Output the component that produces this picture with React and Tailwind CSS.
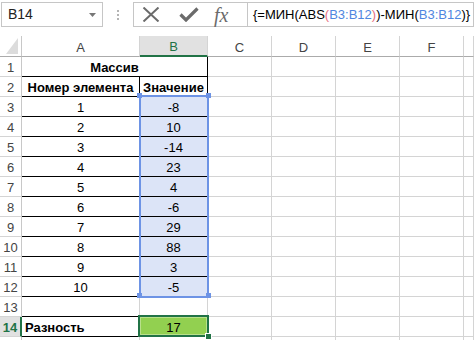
import React from "react";
import { twMerge } from "tailwind-merge";

const values = [-8, 10, -14, 23, 4, -6, 29, 88, 3, -5];

const Cell = ({ children, className = "" }) => (
  <div
    className={twMerge(
      "box-border flex items-center justify-center border-r border-b border-r-[#d4d4d4] border-b-[#d4d4d4] pt-[2px] text-[13px] leading-none text-black",
      className
    )}
  >
    {children}
  </div>
);

const RowHead = ({ n, active }) => (
  <Cell
    className={
      active
        ? "border-r-2 border-r-[#217346] bg-[#e1e1e1] font-bold text-[#217346]"
        : "border-r-[#c8c8c8] text-[#444]"
    }
  >
    {n}
  </Cell>
);

const Blank = ({ count = 5 }) =>
  Array.from({ length: count }).map((_, i) => <Cell key={i} />);

const Ref = ({ children }) => <span className="text-[#4f86e0]">{children}</span>;
const Par = ({ children }) => <span className="text-[#e8707f]">{children}</span>;

const App = () => {
  return (
    <div className="w-[474px] h-[340px] overflow-hidden bg-white font-['Liberation_Sans',Arial,sans-serif]">
      {/* строка формул */}
      <div className="flex h-[36px] items-start pt-[2px] pl-[1px]">
        <div className="box-border flex h-[25px] w-[102px] items-center justify-between border border-[#c6c6c6] pl-[6px] pr-[6px]">
          <span className="text-[14px] text-[#222]">B14</span>
          <svg width="7" height="4" viewBox="0 0 7 4">
            <path d="M0 0 H7 L3.5 4 Z" fill="#777" />
          </svg>
        </div>
        <div className="flex w-[30px] h-[25px] flex-col items-center justify-center gap-[2px]">
          <span className="h-[2px] w-[2px] bg-[#b4b4b4]" />
          <span className="h-[2px] w-[2px] bg-[#b4b4b4]" />
          <span className="h-[2px] w-[2px] bg-[#b4b4b4]" />
        </div>
        <div className="box-border flex h-[25px] flex-1 border border-[#c6c6c6]">
          <div className="flex w-[113px] items-center">
            <svg width="18" height="15" viewBox="0 0 18 15" className="ml-[8px]">
              <path d="M1.5 0.5 L16.5 14.5 M16.5 0.5 L1.5 14.5" stroke="#6b6b6b" strokeWidth="2" />
            </svg>
            <svg width="20" height="15" viewBox="0 0 20 15" className="ml-[19px]">
              <polyline points="1.5,7.5 7,13 18.5,1.5" fill="none" stroke="#6b6b6b" strokeWidth="3.2" />
            </svg>
            <span className="ml-[15px] font-['Liberation_Serif',serif] text-[20px] italic leading-none text-[#6b6b6b]">
              fx
            </span>
          </div>
          <div className="flex flex-1 items-center border-l border-[#c6c6c6] pl-[5px] text-[13px] text-black whitespace-nowrap">
            {"{=МИН(ABS"}
            <Par>(</Par>
            <Ref>B3:B12</Ref>
            <Par>)</Par>
            {")-МИН("}
            <Ref>B3:B12</Ref>
            {")}"}
          </div>
        </div>
      </div>

      {/* сетка */}
      <div className="relative grid grid-cols-[22px_118px_68px_64px_64px_64px_64px_10px] grid-rows-[21px_repeat(15,20px)]">
        <div className="box-border relative border-r border-b border-r-[#c8c8c8] border-b-[#ababab]">
          <svg width="12" height="16" viewBox="0 0 12 16" className="absolute right-[3px] bottom-[2px]">
            <path d="M12 0 V16 H0 Z" fill="#dcdcdc" />
          </svg>
        </div>
        {["A", "B", "C", "D", "E", "F", ""].map((c) => (
          <Cell
            key={c || "G"}
            className={
              c === "B"
                ? "border-b-2 border-b-[#217346] bg-[#e1e1e1] text-[#217346]"
                : "border-b-[#ababab] text-[#444]"
            }
          >
            {c}
          </Cell>
        ))}

        <RowHead n={1} />
        <Cell className="col-span-2 border-r-black border-b-black font-bold">Массив</Cell>
        <Blank />

        <RowHead n={2} />
        <Cell className="border-r-black border-b-black font-bold">Номер элемента</Cell>
        <Cell className="border-r-black border-b-black font-bold">Значение</Cell>
        <Blank />

        {values.map((v, i) => (
          <React.Fragment key={i}>
            <RowHead n={i + 3} />
            <Cell className="border-r-black border-b-black">{i + 1}</Cell>
            <Cell className="border-r-black border-b-black bg-[#dce4f7]">{v}</Cell>
            <Blank />
          </React.Fragment>
        ))}

        <RowHead n={13} />
        <Cell className="border-b-black" />
        <Blank count={6} />

        <RowHead n={14} active />
        <Cell className="justify-start border-b-black pl-[3px] font-bold">Разность</Cell>
        <Cell className="bg-[#92d050]">17</Cell>
        <Blank />

        {/* 15-я строка видна лишь краем */}
        <RowHead />
        <Blank count={7} />

        {/* выделение B3:B12 */}
        <div className="pointer-events-none absolute left-[139px] top-[59px] h-[203px] w-[70px] border-2 border-[#6d93e5]" />
        <div className="absolute left-[137px] top-[57px] h-[5px] w-[5px] bg-[#6d93e5]" />
        <div className="absolute left-[206px] top-[57px] h-[5px] w-[5px] bg-[#6d93e5]" />
        <div className="absolute left-[137px] top-[257px] h-[5px] w-[5px] bg-[#6d93e5]" />
        <div className="absolute left-[206px] top-[257px] h-[5px] w-[5px] bg-[#6d93e5]" />

        {/* активная ячейка B14 */}
        <div className="pointer-events-none absolute left-[138px] top-[279px] h-[22px] w-[71px] border-2 border-[#217346]">
          <div className="h-full w-full border border-[#b8e08a]" />
        </div>
        <div className="absolute left-[205px] top-[297px] h-[7px] w-[7px] border border-white bg-[#217346]" />
      </div>
    </div>
  );
};

export default App;
